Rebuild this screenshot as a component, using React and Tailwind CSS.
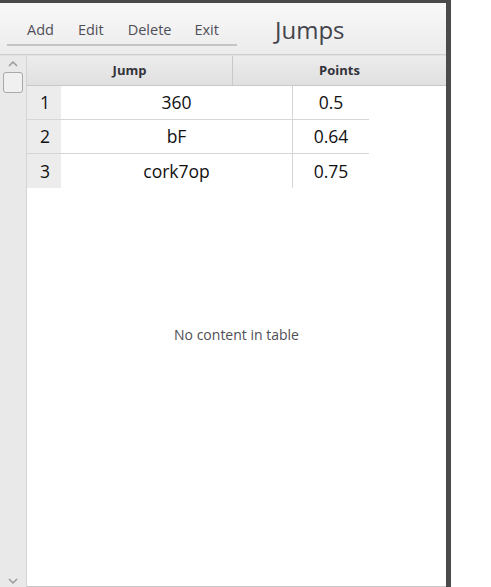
import React from "react";

const rows = [
    { n: 1, jump: "360", points: "0.5" },
    { n: 2, jump: "bF", points: "0.64" },
    { n: 3, jump: "cork7op", points: "0.75" },
];

const App = () => {
    return (
        <div className="w-[491px] h-[587px] bg-white overflow-hidden" style={{ fontFamily: '"Open Sans", "Noto Sans", sans-serif' }}>
            <div className="w-[451px] h-[587px] flex flex-col bg-white border-t-[3px] border-r-[5px] border-[#4a4a4a]">
                {/* TOOLBAR */}
                <div className="h-[52px] flex items-start bg-gradient-to-b from-[#f8f8f8] to-[#ececec] border-b border-[#cfcfcf]">
                    <div className="ml-[7px] mt-[16px] w-[230px] h-[27px] border-b-2 border-[#c4c4c4] flex items-start text-[14.5px] text-[#4f4f58]">
                        <span className="ml-[20px]">Add</span>
                        <span className="ml-[24px]">Edit</span>
                        <span className="ml-[24px]">Delete</span>
                        <span className="ml-[23px]">Exit</span>
                    </div>
                    <div className="ml-[38px] mt-[11px] text-[24px] leading-[32px] text-[#44444c]">Jumps</div>
                </div>

                {/* BODY */}
                <div className="flex flex-1 border-t border-[#e2e2e2]">
                    {/* SCROLLBAR */}
                    <div className="w-[27px] bg-[#e9e9e9] border-r border-[#d4d4d4] flex flex-col items-center">
                        <svg width="12" height="8" viewBox="0 0 12 8" className="mt-[4px]">
                            <path d="M2 6 L6 2 L10 6" fill="none" stroke="#9a9a9a" strokeWidth="1.5" />
                        </svg>
                        <div className="mt-[4px] w-[20px] h-[21px] rounded-[3px] border border-[#a9a9a9] bg-[#f0f0f0]" />
                        <div className="flex-1" />
                        <svg width="12" height="8" viewBox="0 0 12 8" className="mb-[2px]">
                            <path d="M2 2 L6 6 L10 2" fill="none" stroke="#9a9a9a" strokeWidth="1.5" />
                        </svg>
                    </div>

                    {/* TABLE */}
                    <div className="flex-1 flex flex-col border-b border-[#c8c8c8]">
                        <div className="h-[30px] flex bg-gradient-to-b from-[#ececec] to-[#e0e0e0] border-b border-[#c8c8c8] text-[13px] font-bold text-[#33333a]">
                            <div className="w-[206px] flex items-center justify-center border-r border-[#c8c8c8]">Jump</div>
                            <div className="flex-1 flex items-center justify-center">Points</div>
                        </div>
                        {rows.map((r, i) => {
                            const line = i < rows.length - 1 ? "border-b border-[#d6d6d6]" : "";
                            return (
                                <div key={r.n} className="h-[34px] flex text-[17.5px] text-[#111]">
                                    <div className={`w-[34px] bg-[#ececec] flex items-center pl-[13px] ${line}`}>{r.n}</div>
                                    <div className={`w-[232px] flex items-center justify-center border-r border-[#d6d6d6] ${line}`}>{r.jump}</div>
                                    <div className={`w-[76px] flex items-center justify-center ${line}`}>{r.points}</div>
                                </div>
                            );
                        })}
                        <div className="flex-1 flex items-start justify-center">
                            <p className="mt-[136px] text-[14px] text-[#4f4f55]">No content in table</p>
                        </div>
                    </div>
                </div>
            </div>
        </div>
    );
};

export default App;
